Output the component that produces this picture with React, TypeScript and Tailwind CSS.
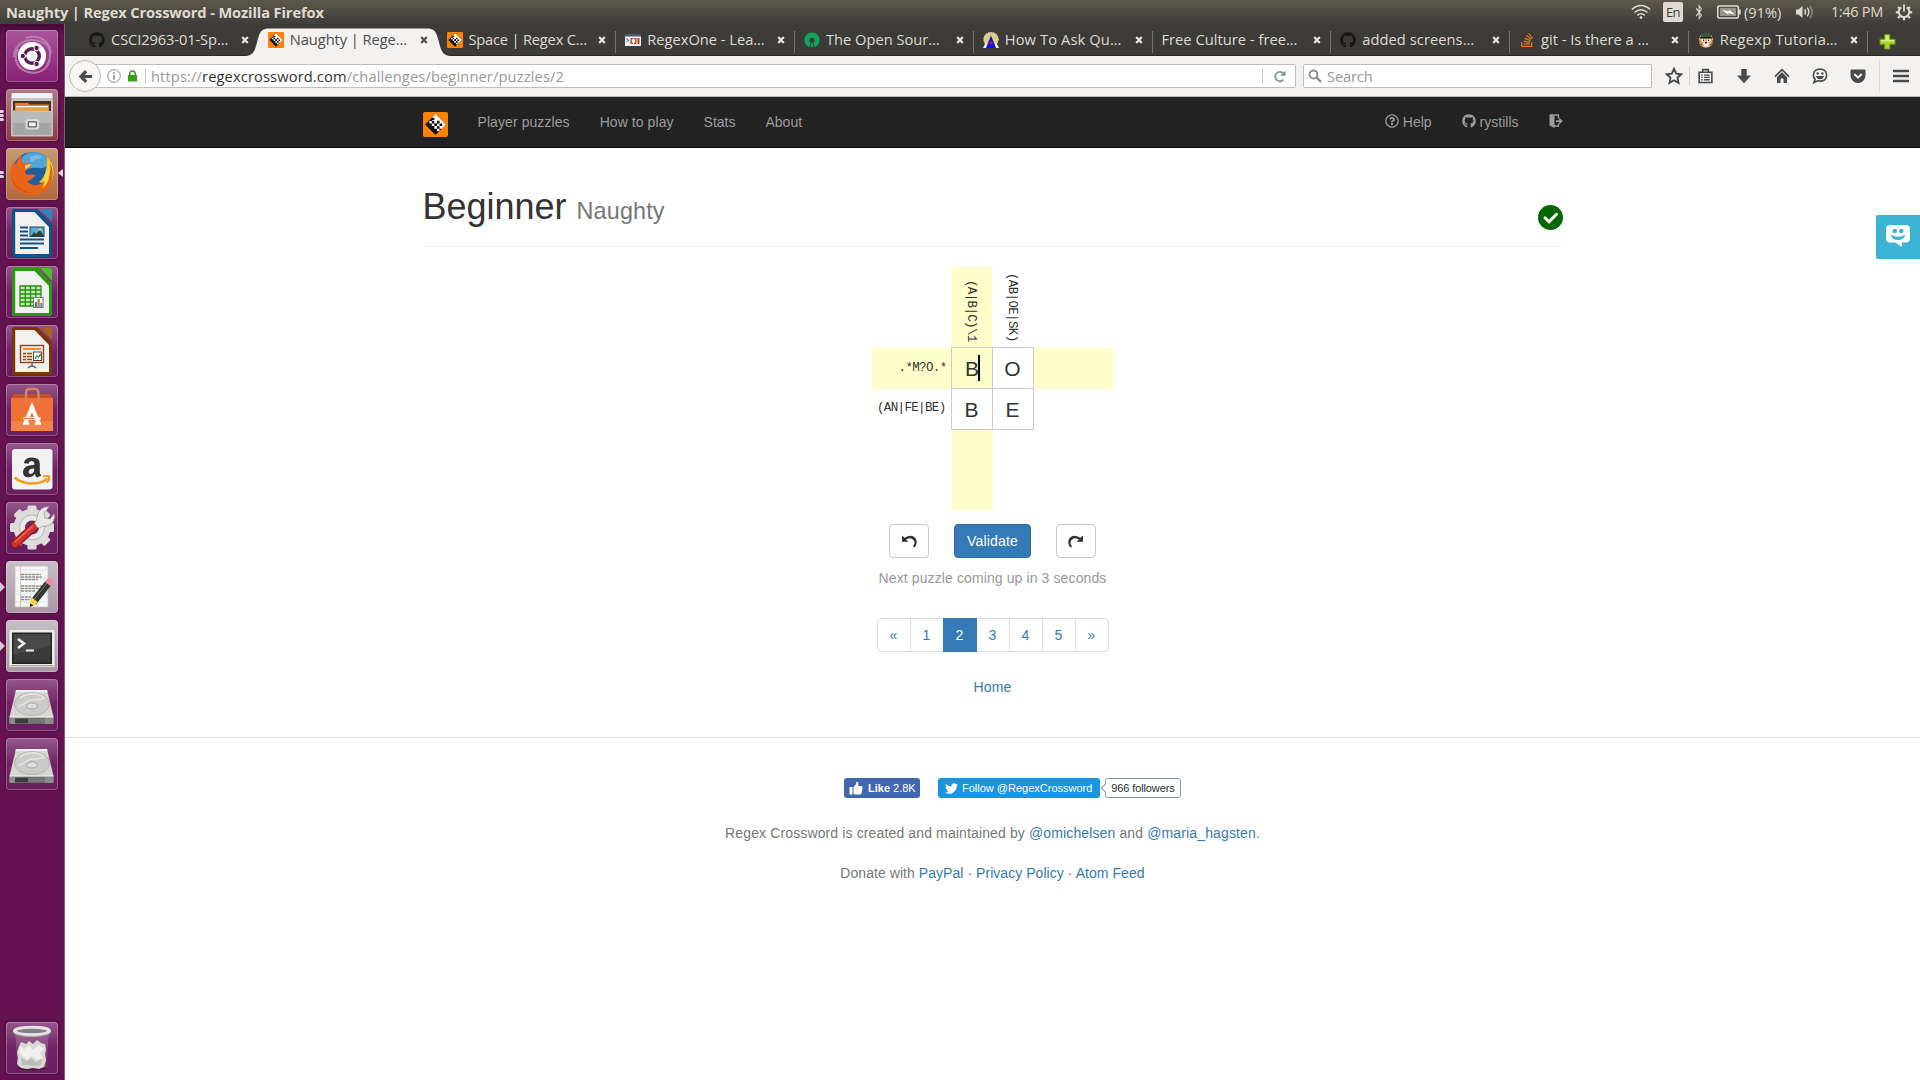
import type { ReactNode } from 'react';
import { FaGithub, FaStackOverflow, FaTwitter, FaBluetoothB, FaRegQuestionCircle } from 'react-icons/fa';

/* ---------- Regex Crossword logo ---------- */
function Logo({ className }: { className: string }) {
  return (
    <svg viewBox="0 0 26 26" className={className}>
      <rect width="26" height="26" rx="2" fill="#ff8200" />
      <path d="M13 2.2 23.8 13 13 23.8 2.2 13Z" fill="#111" />
      <path d="M13 2.2 23.8 13 19.5 17.3h-2.3v-2.6h-2.7v-2.8h-2.8V9.3H9.3V5.9Z" fill="#fff" />
      <path d="M9.2 6h2.6v2.6H9.2zM14.5 9.2h2.7v2.7h-2.7zM17.2 12h2.7v2.6h-2.7zM11.8 12h2.7v2.6h-2.7z" fill="#111" />
      <path d="M9.2 11.9h2.6v2.7H9.2zM11.8 14.6h2.7v2.7h-2.7zM14.5 17.3h2.7V20h-2.7zM6.5 9.3h2.7v2.6H6.5z" fill="#fff" />
    </svg>
  );
}

/* ---------- Launcher ---------- */
function Tile({ bg, children, left, right }: { bg: string; children: ReactNode; left?: number; right?: boolean }) {
  return (
    <div className="relative flex h-[52px] w-full shrink-0 items-center pl-[6px]">
      {left === 1 && <div className="absolute left-0 top-[21px] h-0 w-0 border-y-[5px] border-l-[5px] border-y-transparent border-l-[#d8c8d4]" />}
      {left !== undefined && left > 1 && (
        <div className="absolute left-0 top-0 flex h-full w-[5px] flex-col items-start justify-center gap-[1px]">
          {Array.from({ length: left }, (_, i) => (
            <div key={i} className="h-[3px] w-[4px] rounded-r-full bg-[#e0d0dc]" />
          ))}
        </div>
      )}
      {right && <div className="absolute right-[1px] top-[21px] h-0 w-0 border-y-[4px] border-r-[5px] border-y-transparent border-r-[#e6dae2]" />}
      <div className={`h-[52px] w-[52px] overflow-hidden rounded-[4px] shadow-[inset_0_0_0_1px_rgba(255,255,255,0.25),0_0_3px_rgba(0,0,0,0.35)] ${bg}`}>
        <svg viewBox="0 0 52 52" className="h-full w-full">{children}</svg>
      </div>
    </div>
  );
}

const plumTile = 'bg-gradient-to-b from-[#95578b] via-[#6f2264] to-[#6a1d5f]';

function Doc({ frame, corner, children }: { frame: string; corner: string; children: ReactNode }) {
  return (
    <>
      <path d="M9 2h22.5L46 17v31a2 2 0 0 1-2 2H8a2 2 0 0 1-2-2V4a2 2 0 0 1 2-2Z" fill={frame} />
      <path d="M9.2 5h19.3L43 20v27H9.2Z" fill="#f1f1f1" />
      <path d="M34 2h10a2 2 0 0 1 2 2v10.5Z" fill={corner} />
      {children}
    </>
  );
}

function Drive() {
  return (
    <>
      <path d="M10 11h31l6.5 27H3.5Z" fill="#d6d6d4" />
      <path d="M10 11h31l.5 2h-32Z" fill="#f1f1f0" />
      <ellipse cx="26" cy="25" rx="17.5" ry="11.5" fill="#cbcbc9" stroke="#b0b0ae" strokeWidth=".9" />
      <path d="M14 19c7-6 20-5 24 0-4 2-8 2-12 2s-7 5-14 6" fill="none" stroke="#e3e3e2" strokeWidth="1.6" />
      <ellipse cx="26" cy="27" rx="5.5" ry="3" fill="#dedede" stroke="#999" strokeWidth=".8" />
      <path d="M3.5 38h44l.3 5.5q0 1.5-1.5 1.5H4.7q-1.5 0-1.5-1.5Z" fill="#8d8d8b" />
      <path d="M9 39.500h30v5H9z" fill="#3c3c3b" />
      <path d="M22 39.500h17v5H22z" fill="#767674" />
      <path d="M3.500 38h44" stroke="#f3f3f3" strokeWidth="1" />
    </>
  );
}

function Launcher() {
  return (
    <aside className="flex w-[65px] shrink-0 flex-col gap-[7px] border-r border-[#8a5580] bg-[#641250] bg-gradient-to-b from-[#3f0b33] from-0% via-[#641250] via-[1%] to-[#641250] pt-[6px]">
      <Tile bg="bg-gradient-to-b from-[#a8559a] to-[#871d74]">
        <path d="M8 27C8 12 24 6 38 13c7 4 8 14 3 22M44 26c0 14-14 21-27 14-8-5-9-14-5-21M20 8c12-5 24 3 25 15" fill="none" stroke="#c389b9" strokeWidth="2" opacity=".8" />
        <circle cx="26" cy="26" r="14" fill="#fff" />
        <circle cx="26" cy="26" r="7.300" fill="none" stroke="#5a1a50" strokeWidth="3.400" />
        <path d="M26 26 12 26M26 26l7-12M26 26l7 12" stroke="#fff" strokeWidth="1.300" />
        <g fill="#5a1a50" stroke="#fff" strokeWidth="1"><circle cx="16.800" cy="26" r="2.700" /><circle cx="30.600" cy="18" r="2.700" /><circle cx="30.600" cy="34" r="2.700" /></g>
      </Tile>
      <Tile bg="bg-gradient-to-b from-[#b07a86] to-[#8a3a42]" left={3}>
        <path d="M6 4h40l1 9v33q0 1.500-1.500 1.500h-39Q5 47.500 5 46V13Z" fill="#c6c6c6" />
        <path d="M6 4h40l.6 5H5.400Z" fill="#f2f2f2" />
        <path d="M7 12h38v10H7z" fill="#4a3426" />
        <path d="M9 14h13l1.500 1.500H43V22H9z" fill="#e87a3a" />
        <path d="M10 17h32v1.500H10z" fill="#fff" /><path d="M10 18.500h32V22H10z" fill="#f0a050" />
        <path d="M6.500 21.500H19l2 2h24.500V46h-39Z" fill="#a5a5a5" />
        <path d="M6.500 21.500H19l2 2h24.500V34h-39Z" fill="#b9b9b9" />
        <rect x="19.500" y="30" width="13.500" height="10.500" rx="2.500" fill="#d9d9d9" />
        <rect x="22.300" y="32.800" width="8" height="5" rx=".5" fill="#f4f4f4" stroke="#5c5c5c" strokeWidth="1.200" />
      </Tile>
      <Tile bg="bg-gradient-to-b from-[#c79a76] to-[#b0683a]" left={2} right>
        <circle cx="27" cy="25" r="21" fill="#1f5f9c" />
        <path d="M17 8c7-6 19-5 25 3 2 6-3 10-9 9s-12 0-14 3c-3-5-5-9-2-15Z" fill="#53a5d8" />
        <path d="M24 9c4-3 9-3 12 0-2 3-6 1-8 4s-5 1-4-4Z" fill="#8bc9ea" opacity=".6" />
        <path d="M41 9c8 7 9 20 3 28-6 9-18 12-27 7 11 2 20-3 23-11-3 2-5 2-7 1 7-5 8-15 8-25Z" fill="#f9c62c" />
        <path d="M44 15c6 13 2 26-10 31-13 4-27-2-29.500-16C3.500 23 5 17 8.500 12.500c0 2 .5 3 1.500 4 1-4 3-7 6-9-1 4 0 6 2 8 3-1 7 0 8 1-1 3-4 5-7 6 0 2 1 3 2 4 3 1 6-1 9 1-3 1-4 5-9 6 5 5 13 4 17 0 6-5 7-11 6-18Z" fill="#e8641b" />
        <path d="M42.500 17c3 10 0 19-6 23 2-5 2-8 2-12 2-3 4-7 4-11Z" fill="#fbd743" />
        <path d="M5 26c2 10 10 19 23 19-10 1-21-5-23-19Z" fill="#c9400f" />
        <path d="m19 17 6-1c0 2-3 4-6 5Z" fill="#f8d0a0" />
      </Tile>
      <Tile bg={plumTile}>
        <Doc frame="#12528a" corner="#2f84bb">
          <path d="M14 20.500h8M14 24.500h8M14 28.500h8M14 32.500h24M14 36.500h24M14 41h18" stroke="#12528a" strokeWidth="2" />
          <rect x="24" y="20" width="14" height="9.500" fill="#5fb0d8" stroke="#12406a" strokeWidth="1" />
          <path d="m25 29 3-4 2 2 4-4 4 6Z" fill="#28452f" /><circle cx="34" cy="22.500" r="1.200" fill="#f4d23c" />
        </Doc>
      </Tile>
      <Tile bg={plumTile}>
        <Doc frame="#2a9a12" corner="#4cc02c">
          <path d="M14 20h21v20H14z" fill="#c4eab4" />
          <path d="M14 20h21v20H14zM14 24h21M14 28h21M14 32h21M14 36h21M19.300 20v20M24.500 20v20M29.800 20v20" stroke="#269010" strokeWidth="1.300" fill="none" />
          <rect x="27.500" y="31.500" width="9.500" height="10" fill="#fff" stroke="#777" />
          <path d="M29 36h2v5h-2z" fill="#2f84bb" /><path d="M31.500 33h2.200v8h-2.200z" fill="#e0641b" /><path d="M34.300 37h2v4h-2z" fill="#4a90d0" />
        </Doc>
      </Tile>
      <Tile bg={plumTile}>
        <Doc frame="#7c3508" corner="#a8621e">
          <rect x="14.500" y="20.500" width="23" height="17" fill="#f6eee4" stroke="#96430f" strokeWidth="1.400" />
          <path d="M17 24h18" stroke="#e88a4a" strokeWidth="2" />
          <path d="M17 28.500h3M17 31.500h3M17 34.500h3M21 28.500h5M21 31.500h5M21 34.500h5" stroke="#96430f" strokeWidth="1.700" />
          <rect x="27.500" y="27" width="8" height="8.500" fill="#fff" stroke="#444" /><path d="m29 34 2-3 1.500 1L35 29" stroke="#24962a" strokeWidth="1.300" fill="none" />
          <path d="M26 38v3M22 43q4-4 8 0" stroke="#666" strokeWidth="1.500" fill="none" />
        </Doc>
      </Tile>
      <Tile bg={plumTile}>
        <path d="M5 14.500 8 10h36l3 4.500Z" fill="#c4502a" />
        <path d="M5 14h42v33H5z" fill="#ef7136" /><path d="M5 37h42v10H5z" fill="#f58345" />
        <path d="M20 18V9q0-4 4-4h4.500q4 0 4 4v9" fill="none" stroke="#d98468" strokeWidth="2.500" />
        <g stroke="#fff" fill="none"><path d="m19.500 39 6.500-16 6.500 16" strokeWidth="4" /><path d="M17.500 34.500h17" strokeWidth="3" /><path d="M17 39.500h6M29 39.500h6" strokeWidth="2.500" /></g>
        <path d="M18 34.500h11" stroke="#ef7136" strokeWidth="1.200" />
      </Tile>
      <Tile bg={plumTile}>
        <rect x="6" y="6" width="40.500" height="40.500" rx="3" fill="#f2f2f2" />
        <path d="M31 34.500q-2-1.500-2-3.800-2.500 3.600-6.800 3.600-5.200 0-5.200-5.300 0-6.800 11.300-7v-1q0-3-2.600-3-2.700 0-3 2.700l-4.800-.4q.6-5.800 8.300-5.800 7.600 0 7.600 6.300V29q0 2.200 1.700 3.600ZM28.300 25.500q-5.700 0-5.700 3.400 0 2 1.900 2 3.800 0 3.800-5.400Z" fill="#333" />
        <path d="M8.500 34.500c9 7.500 24 8 33 1.200" fill="none" stroke="#f79b1f" strokeWidth="2.600" />
        <path d="M37 33.500q4-1.300 6.400.2-.2 3.800-2.600 6" fill="none" stroke="#f79b1f" strokeWidth="2" />
      </Tile>
      <Tile bg={plumTile}>
        <g transform="translate(26 25.500)">
          <circle r="14" fill="none" stroke="#dcdcda" strokeWidth="9" />
          {[0, 45, 90, 135, 180, 225, 270, 315].map((a) => (
            <rect key={a} x="-4.500" y="-22" width="9" height="8" rx="1.500" fill="#dcdcda" transform={`rotate(${a})`} />
          ))}
          <circle r="12.500" fill="#e8e8e7" stroke="#b8b8b6" /><circle r="7" fill="#6d2a62" />
        </g>
        <path d="m9 42 21-19" stroke="#8d1410" strokeWidth="8.500" strokeLinecap="round" />
        <path d="m9 42 21-19" stroke="#d0302a" strokeWidth="6.500" strokeLinecap="round" />
        <path d="m9 40 18-16" stroke="#ea6a62" strokeWidth="1.500" />
        <path d="M29 22c-1-2 2-3 2-7 1-7 7-11 12-10l-5 6 1 5 5 1 4-5c2 6-3 12-9 12-3 0-5 2-7 2Z" fill="#e9e9e8" stroke="#9a9a98" strokeWidth=".8" />
      </Tile>
      <Tile bg="bg-gradient-to-b from-[#c8bec6] to-[#a898a4]" left={1}>
        <path d="M9 5h33v41H9z" fill="#f7f7f6" stroke="#bcbcbc" strokeWidth=".8" />
        <path d="M14.500 5v41" stroke="#f0a8a8" strokeWidth=".8" />
        <path d="M10 9h31M10 17h31M10 33h31M10 41h31" stroke="#c8d4ea" strokeWidth=".6" />
        <path d="M15 13.500h20M15 16h21M15 18.500h17M15 25h21M15 27.500h20M15 30h14M15 36h10M15 38.500h9" stroke="#8e8e8e" strokeWidth="1.300" strokeDasharray="3 .7" />
        <path d="m24.500 39 15-19 5.500 4.500-15 19Z" fill="#33352f" /><path d="m26.500 40.500 15-19" stroke="#777" strokeWidth="1" />
        <path d="m24.500 39 1.500-2.500 5.700 4.500-1.700 2.500-6 2.500Z" fill="#f0d442" /><path d="m24.200 42.500-.4 3.600 3.500-1.500Z" fill="#222" />
        <path d="m39 21 3-4q1-1 2.500 0l2.300 2q1.200 1 .2 2.300L44.500 25Z" fill="#e88ca8" />
      </Tile>
      <Tile bg="bg-gradient-to-b from-[#c8bec6] to-[#a898a4]" left={1}>
        <rect x="3.500" y="10" width="45" height="37" rx="1.500" fill="#ececea" /><rect x="6" y="12.500" width="40" height="31.500" fill="#222" />
        <rect x="7.500" y="14" width="37" height="28.500" fill="#393a39" /><path d="M7.500 14h37v12l-37 9Z" fill="#474847" />
        <path d="m12 19 6 4.500-6 4.500" fill="none" stroke="#eee" strokeWidth="2.600" /><path d="M20 30.500h8" stroke="#eee" strokeWidth="2.200" />
        <path d="M5 45.700h42" stroke="#8c8c8a" />
      </Tile>
      <Tile bg={plumTile}><Drive /></Tile>
      <Tile bg={plumTile}><Drive /></Tile>
      <div className="flex-1" />
      <div className="pb-[6px]">
        <Tile bg={plumTile}>
          <path d="M9 9h34l-3 37q-14 4-28 0Z" fill="#b99ab4" opacity=".35" />
          <ellipse cx="26" cy="46" rx="14" ry="2.500" fill="#4e1843" />
          <path d="m12 27 3-7 5 2 3-3 4 3 4-4 4 3 4 1 1 5-1 5 1 6-2 7-5 2-6-1-6 1-6-1-4-4 1-6-1-5Z" fill="#d9d9d4" />
          <path d="m14 24 5 3 4-4 4 5 6-5 5 4-4 4 3 5-6 2-5-4-5 4-5-4-3-4Z" fill="#f0f0ee" /><path d="m15 36 6 3 4-3 5 4 6-3-1 6-8 1-6-1-5 0Z" fill="#bdbdb8" />
          <ellipse cx="26" cy="9" rx="17.500" ry="3.800" fill="#8c7c88" stroke="#e4e4e2" strokeWidth="3" />
          <path d="M9.500 12q16 5.500 33 0" stroke="#a8a8a5" strokeWidth="1" fill="none" />
        </Tile>
      </div>
    </aside>
  );
}

/* ---------- Desktop top bar ---------- */
function TopBar() {
  return (
    <header className="flex h-[24px] shrink-0 items-center bg-gradient-to-b from-[#5c584a] to-[#3f3e3a] pl-[6px] font-['Open_Sans',sans-serif] text-[14.67px] leading-[24px] text-[#dfdbd2]">
      <span className="-mt-[1px] font-bold tracking-[-0.12px]">Naughty | Regex Crossword - Mozilla Firefox</span>
      <div className="flex-1" />
      <svg viewBox="0 0 20 16" className="h-4 w-5" fill="none" stroke="#dfdbd2" strokeWidth="1.500">
        <path d="M.8 5.500q9.200-8 18.400 0M3.500 8.500q6.500-5.500 13 0M6.300 11.300q3.700-3 7.400 0" />
        <circle cx="10" cy="13.600" r="1" fill="#dfdbd2" strokeWidth="1" />
      </svg>
      <span className="ml-[12px] flex h-[20px] w-[20px] items-center justify-center rounded-[2px] bg-[#dfdbd2] text-[13px] leading-[20px] tracking-[-0.6px] text-[#3c3b37]">En</span>
      <FaBluetoothB className="ml-[8px] h-[16px] w-[16px] scale-x-75 text-[#dfdbd2]" />
      <svg viewBox="0 0 24 14" className="ml-[10px] h-[14px] w-[24px]">
        <rect x=".8" y="1" width="20.500" height="12" rx="1" fill="none" stroke="#dfdbd2" strokeWidth="1.500" />
        <rect x="3" y="3" width="16" height="8" fill="#96938b" /><path d="M22 4.500h1.700v5H22z" fill="#dfdbd2" />
        <path d="m5 5 7 1.500-.5-2 6.500 5-7-1.500.7 2Z" fill="#fff" />
      </svg>
      <span className="ml-[3px] w-[38px] whitespace-nowrap">(91%)</span>
      <svg viewBox="0 0 20 16" className="ml-[13px] h-4 w-5" fill="none" stroke="#dfdbd2" strokeWidth="1.400">
        <path d="M1 5.500h2.500L7.500 2v12l-4-3.500H1Z" fill="#dfdbd2" stroke="none" />
        <path d="M9.700 5.500q1.800 2.500 0 5M12.300 3.700q3 4.300 0 8.600" /><path d="M15 2q4.300 6 0 12" stroke="#8d8a82" />
      </svg>
      <span className="ml-[16px] whitespace-nowrap text-[14.500px] tracking-[-0.3px]">1:46 PM</span>
      <svg viewBox="0 0 18 18" className="ml-[12px] mr-[7px] h-[18px] w-[18px]" fill="none" stroke="#dfdbd2">
        <path d="M6.200 4.300a5.300 5.300 0 1 0 5.600 0" strokeWidth="2" /><path d="M9 1.500v7" strokeWidth="1.800" />
        <path d="M3 4l1.700 1.500M15 4l-1.700 1.500M.8 9.300h2.700M14.500 9.300h2.700M3 15l1.800-1.800M15 15l-1.800-1.800M9 14.500v2.700" strokeWidth="2.200" />
      </svg>
    </header>
  );
}

/* ---------- Browser tabs ---------- */
const favicon = 'h-4 w-4 shrink-0';
const tabs: { title: string; icon?: ReactNode; track: string }[] = [
  { title: 'CSCI2963-01-Sp…', icon: <FaGithub className={`${favicon} text-[#191717]`} />, track: 'tracking-[-0.1px]' },
  { title: 'Naughty | Rege…', icon: <Logo className={favicon} />, track: 'tracking-[-0.06px]' },
  { title: 'Space | Regex C…', icon: <Logo className={favicon} />, track: 'tracking-[-0.2px]' },
  {
    title: 'RegexOne - Lea…',
    icon: (
      <svg viewBox="0 0 16 16" className={favicon}>
        <rect y="2" width="16" height="12" fill="#f4f4f2" /><path d="M0 2h16v2.500H0z" fill="#4a5a70" />
        <path d="m1.500 6.500 2 1.700-2 1.700" stroke="#444" fill="none" /><path d="M5.500 6H8v1.200H6.800v3.600H8V12H5.500zM9 6h2.500v6H9v-1.200h1.200V7.200H9zM12.500 6h2v6h-2z" fill="#c43c1c" />
      </svg>
    ),
    track: 'tracking-[0px]',
  },
  {
    title: 'The Open Sour…',
    icon: (
      <svg viewBox="0 0 16 16" className={favicon}>
        <path d="M5.700 15.300A7.600 7.600 0 1 1 10.300 15.300L8.900 10.700A2.600 2.600 0 1 0 7.100 10.700Z" fill="#0fa65c" /><path d="M6.900 10.500h2.200l.7 5H6.200Z" fill="#0fa65c" stroke="#3c3b37" strokeWidth=".8" />
      </svg>
    ),
    track: 'tracking-[0px]',
  },
  {
    title: 'How To Ask Qu…',
    icon: (
      <svg viewBox="0 0 16 16" className={favicon}>
        <circle cx="8" cy="7.500" r="7.300" fill="#d8d080" stroke="#eee" strokeWidth=".8" strokeDasharray="1.300 1.300" />
        <path d="M0 16 3 10l3 6ZM16 16l-3-6-3 6Z" fill="#eee" /><path d="M8 3.500 13 16H3Z" fill="#1010e0" /><circle cx="8" cy="11" r="1.700" fill="#b01840" />
      </svg>
    ),
    track: 'tracking-[0.12px]',
  },
  { title: 'Free Culture - free…', track: 'tracking-[0.03px]' },
  { title: 'added screens…', icon: <FaGithub className={`${favicon} text-[#191717]`} />, track: 'tracking-[0.07px]' },
  { title: 'git - Is there a …', icon: <FaStackOverflow className={`${favicon} text-[#e87424]`} />, track: 'tracking-[0px]' },
  {
    title: 'Regexp Tutoria…',
    icon: (
      <svg viewBox="0 0 16 16" className={favicon}>
        <circle cx="8" cy="8.500" r="7.300" fill="#e0a060" /><path d="M2.500 4Q8-2.500 13.500 4L12 5.500H4Z" fill="#2c5c38" /><path d="M1 5h14l-1.500 1.500h-11Z" fill="#241a14" />
        <path d="M3.500 7h3.700v2.500H3.500zM8.800 7h3.700v2.500H8.800z" fill="#fff" /><path d="M5 7.500h1.300v1.600H5zM9.800 7.500h1.300v1.600H9.800z" fill="#222" />
        <path d="M5 11q3-2 6 0l-1 3.500H6Z" fill="#fff" /><path d="M7 10h2v1.500H7z" fill="#222" /><path d="M1 8v3M15 8v3M2.500 12l1.500 1M13.500 12 12 13" stroke="#5a2c14" />
      </svg>
    ),
    track: 'tracking-[0.25px]',
  },
];

function TabClose({ dark }: { dark: boolean }) {
  return (
    <svg viewBox="0 0 8 8" className={dark ? 'h-2 w-2 text-[#555]' : 'h-2 w-2 text-[#e6e4e0]'}>
      <path d="m1.200 1 5.600 6M6.800 1 1.200 7" stroke="currentColor" strokeWidth="2.200" />
    </svg>
  );
}

function TabBar() {
  return (
    <div className="flex h-[32px] shrink-0 border-b border-[#2a2926] bg-[#3c3b37] pl-[15px] font-['Open_Sans',sans-serif] text-[14.67px] leading-[20px] text-[#dedbd4]">
      {tabs.map((t, i) => {
        const active = i === 1;
        return (
          <div key={t.title} className="relative flex h-[31px] w-[178.750px] shrink-0 items-center pl-[9px]">
            {active && (
              <svg viewBox="0 0 206 28" className="absolute -left-[14px] top-[4px] h-[28px] w-[206px]">
                <path d="M0 28c7-.5 9-3 11-10l2.500-9C15.500 2.500 18 .5 24 .5h158c6 0 8.500 2 10.500 8.500l2.500 9c2 7 4 9.500 11 10Z" fill="#f3f2f0" />
              </svg>
            )}
            <div className={`relative flex w-full items-center gap-[6px] ${active ? 'text-[#4c4c4c]' : ''}`}>
              {t.icon}
              <span className={`-mt-[1px] flex-1 overflow-hidden whitespace-nowrap ${t.track}`}>{t.title}</span>
              <div className="mr-[10px] shrink-0"><TabClose dark={active} /></div>
            </div>
            {i > 1 && <div className="absolute right-0 top-[7px] h-[22px] w-px bg-[#77756f]" />}
          </div>
        );
      })}
      <svg viewBox="0 0 18 18" className="ml-[11px] mt-[9px] h-[17px] w-[17px]">
        <path d="M6 1.500h5.500v5H17V12h-5.500v5H6v-5H1V6.500h5Z" fill="#a8d324" stroke="#6c9410" />
        <path d="M7 2.500h3.500v5H16v1.500H2V7.500h5Z" fill="#d6ef7c" />
      </svg>
    </div>
  );
}

/* ---------- Browser toolbar ---------- */
function Toolbar() {
  return (
    <div className="flex h-[41px] shrink-0 items-center border-b border-[#bdb9b4] bg-[#f3f2f0] pl-[4px] font-['Open_Sans',sans-serif] text-[14.670px] leading-[20px]">
      <div className="z-10 flex h-[32px] w-[32px] shrink-0 items-center justify-center rounded-full border border-[#bdbab6] bg-[#f8f7f6]">
        <svg viewBox="0 0 16 16" className="h-[15px] w-[15px]"><path d="M7.500 1 10 3.500 7.300 6.300H15v3.400H7.300L10 12.500 7.500 15 .7 8Z" fill="#4d4d4d" /></svg>
      </div>
      <div className="-ml-[10px] flex h-[24px] w-[1205px] shrink-0 items-center rounded-[2px] border border-[#c2bfbb] bg-white pl-[15px]">
        <svg viewBox="0 0 14 14" className="h-[14px] w-[14px]"><circle cx="7" cy="7" r="6.300" fill="none" stroke="#8c8c8c" /><path d="M6.200 3.200h1.600v1.500H6.200zM6.200 5.800h1.600v5H6.200z" fill="#8c8c8c" /></svg>
        <svg viewBox="0 0 11 13" className="ml-[6px] h-[12px] w-[11px]"><path d="M2.500 6V4a3 3 0 0 1 6 0v2" fill="none" stroke="#3f9c1c" strokeWidth="1.600" /><rect x=".5" y="5.500" width="10" height="7" rx=".8" fill="#3f9c1c" /></svg>
        <div className="ml-[7px] h-[16px] w-px bg-[#d0d0d0]" />
        <span className="-mt-[1px] ml-[5px] flex-1 whitespace-nowrap tracking-[0.130px] text-[#999]">https://<span className="text-[#333]">regexcrossword.com</span>/challenges/beginner/puzzles/2</span>
        <div className="h-[16px] w-px bg-[#d0d0d0]" />
        <svg viewBox="0 0 13 13" className="ml-[10px] mr-[9px] h-[13px] w-[13px]"><path d="M10.600 9.500a4.700 4.700 0 1 1-.4-6.300" fill="none" stroke="#8291a2" strokeWidth="1.800" /><path d="M12.500.5v5.300H7.200Z" fill="#8291a2" /></svg>
      </div>
      <div className="ml-[7px] flex h-[24px] w-[349px] shrink-0 items-center rounded-[2px] border border-[#c2bfbb] bg-white pl-[4px]">
        <svg viewBox="0 0 14 14" className="h-[14px] w-[14px]" fill="none" stroke="#8c8c8c"><circle cx="5.500" cy="5.500" r="4" strokeWidth="1.800" /><path d="m8.500 8.500 4.500 4.500" strokeWidth="2.400" /></svg>
        <span className="-mt-[1px] ml-[5px] tracking-[-0.150px] text-[#999]">Search</span>
      </div>
      <div className="flex flex-1 items-center text-[#4a4a4a]">
        <svg viewBox="0 0 18 18" className="ml-[13px] h-[18px] w-[18px]"><path d="m9 1.800 2.200 4.800 5.100.6-3.800 3.500 1 5.200L9 13.300l-4.500 2.600 1-5.200L1.700 7.200l5.100-.6Z" fill="none" stroke="currentColor" strokeWidth="1.900" /></svg>
        <div className="ml-[6px] h-[18px] w-px bg-[#d2d0cd]" />
        <svg viewBox="0 0 16 16" className="ml-[8px] h-[16px] w-[15px]"><path d="M1.200 4h13.600v11H1.200zM5 4V1.200h6V4" fill="none" stroke="currentColor" strokeWidth="1.700" /><path d="M3.500 7h1.500M3.500 9.500h1.500M3.500 12h1.500M6.500 7h6M6.500 9.500h6M6.500 12h6" stroke="currentColor" strokeWidth="1.400" /></svg>
        <svg viewBox="0 0 16 16" className="ml-[23px] h-[16px] w-[16px]"><path d="M5.300 1h5.400v6.500H15l-7 7.700-7-7.700h4.300Z" fill="currentColor" /></svg>
        <svg viewBox="0 0 16 16" className="ml-[22px] h-[16px] w-[16px]"><path d="m1 8.700 7-7 7 7" fill="none" stroke="currentColor" strokeWidth="1.700" /><path d="m8 4.300 5 5V15H9.500v-4.500h-3V15H3V9.300Z" fill="currentColor" /></svg>
        <svg viewBox="0 0 16 16" className="ml-[22px] h-[16px] w-[16px]"><path d="M8 1.200c4 0 6.600 2.500 6.600 6s-2.600 6-6.600 6q-1.300 0-2.400-.4L2 14.500l1-3.300Q1.400 9.500 1.400 7.200c0-3.500 2.600-6 6.600-6Z" fill="none" stroke="currentColor" strokeWidth="1.700" /><circle cx="5.700" cy="5.500" r="1.200" fill="currentColor" /><circle cx="10.300" cy="5.500" r="1.200" fill="currentColor" /><path d="M4 8h8q-.8 3.300-4 3.300T4 8Z" fill="currentColor" /></svg>
        <svg viewBox="0 0 16 16" className="ml-[22px] h-[16px] w-[16px]"><path d="M1.500 1.500h13q1 0 1 1V7c0 4.500-3.500 8-7.500 8S.5 11.500.5 7V2.500q0-1 1-1Z" fill="currentColor" /><path d="m4.300 6 3.700 3.600L11.700 6" fill="none" stroke="#f3f2f0" strokeWidth="2" /></svg>
        <div className="ml-[13px] h-[32px] w-px bg-[#dddbd8]" />
        <svg viewBox="0 0 16 14" className="ml-[13px] h-[14px] w-[16px]"><path d="M1 2h14M1 7h14M1 12h14" stroke="currentColor" strokeWidth="2.600" strokeLinecap="round" /></svg>
      </div>
    </div>
  );
}

/* ---------- Site navigation ---------- */
function NavBar() {
  return (
    <nav className="flex h-[51px] shrink-0 justify-center border-b border-[#080808] bg-[#222]">
      <div className="flex w-[1140px] items-center text-[14px] leading-[20px] text-[#9d9d9d]">
        <Logo className="mt-[4px] h-[25px] w-[25px]" />
        <div className="ml-[30px] flex gap-[30px]">
          <span className="tracking-[0.080px]">Player puzzles</span>
          <span className="tracking-[0.070px]">How to play</span>
          <span>Stats</span>
          <span>About</span>
        </div>
        <div className="flex-1" />
        <div className="flex items-center gap-[4px]"><FaRegQuestionCircle className="-mt-[2px] h-[14px] w-[14px]" /><span>Help</span></div>
        <div className="ml-[30px] flex items-center gap-[4px]"><FaGithub className="-mt-[2px] h-[14px] w-[14px]" /><span>rystills</span></div>
        <svg viewBox="0 0 14 14" className="-mt-[3px] ml-[30px] h-[14px] w-[14px]">
          <path d="M.5.500 5.500 2v12L.5 11.500Z" fill="#9d9d9d" /><path d="M1 1h8.500v3.500M9.500 9.500V12H5" fill="none" stroke="#9d9d9d" strokeWidth="1.300" /><path d="M7 6.200h3.200V3.700L14 7l-3.800 3.300V7.900H7Z" fill="#9d9d9d" />
        </svg>
      </div>
    </nav>
  );
}

/* ---------- Puzzle ---------- */
const mono = "font-['Liberation_Mono',monospace] text-[12.500px] tracking-[-0.650px] text-[#333]";
const cell = 'flex h-[42px] w-[42px] items-center justify-center border border-[#ccc] text-[21px] leading-none text-[#333]';

function Puzzle() {
  return (
    <div className="mt-[20px] grid grid-cols-[79px_41px_41px_81px] grid-rows-[80px_41px_41px_80px]">
      <div />
      <div className="flex items-end justify-center bg-[#ffffcc] pb-[5px]">
        <span className={`[writing-mode:vertical-rl] ${mono}`}>(A|B|C)\1</span>
      </div>
      <div className="flex items-end justify-center pb-[5px]">
        <span className={`[writing-mode:vertical-rl] ${mono}`}>(AB|OE|SK)</span>
      </div>
      <div />

      <div className="-mr-px -mb-px mt-[1px] flex h-[41px] items-center justify-end bg-[#ffffcc] pr-[5px]"><span className={mono}>.*M?O.*</span></div>
      <div className={`${cell} bg-[#ffffcc]`}><span className="pl-[2px]">B</span><span className="-ml-[1px] h-[26px] w-[2px] bg-black" /></div>
      <div className={`${cell} bg-white`}>O</div>
      <div className="ml-[1px] mt-[1px] h-[41px] bg-[#ffffcc]" />

      <div className="flex items-center justify-end pr-[5px]"><span className={mono}>(AN|FE|BE)</span></div>
      <div className={`${cell} bg-white`}>B</div>
      <div className={`${cell} bg-white`}>E</div>
      <div />

      <div />
      <div className="ml-[1px] mt-[1px] h-[80px] w-[41px] bg-[#ffffcc]" />
    </div>
  );
}

function RoundArrow({ flip }: { flip?: boolean }) {
  return (
    <svg viewBox="0 0 16 14" className={flip ? 'h-[14px] w-[16px] -scale-x-100' : 'h-[14px] w-[16px]'}>
      <path d="M1 1.500v6.200h6.300L5.100 5.400q5.500-3 8 1.300 1.300 3-1.200 5.800l1.700 1q3.300-3.800 1.600-8Q11.800-.8 3.500 3.800Z" fill="#333" />
    </svg>
  );
}

function Content() {
  const pages = ['«', '1', '2', '3', '4', '5', '»'];
  return (
    <div className="flex flex-col items-center">
      <div className="mt-[39px] flex h-[60px] w-[1140px] justify-between border-b border-[#eee]">
        <h1 className="text-[36px] leading-[40px] text-[#333]">Beginner <small className="text-[23.400px] tracking-[0.120px] text-[#777]">Naughty</small></h1>
        <svg viewBox="0 0 25 25" className="mt-[18px] h-[25px] w-[25px]"><circle cx="12.500" cy="12.500" r="12.500" fill="#060" /><path d="m7 12.800 4 4 7.500-7.500" fill="none" stroke="#fff" strokeWidth="3" strokeLinecap="round" /></svg>
      </div>
      <Puzzle />
      <div className="mt-[15px] flex gap-[25px] text-[14px] leading-[20px]">
        <button className="flex h-[34px] w-[40px] items-center justify-center rounded-[4px] border border-[#ccc] bg-white"><RoundArrow /></button>
        <button className="h-[34px] w-[77px] rounded-[4px] border border-[#2e6da4] bg-[#337ab7] tracking-[0.150px] text-white">Validate</button>
        <button className="flex h-[34px] w-[40px] items-center justify-center rounded-[4px] border border-[#ccc] bg-white"><RoundArrow flip /></button>
      </div>
      <p className="mt-[10px] text-[14px] leading-[20px] tracking-[0.110px] text-[#999]">Next puzzle coming up in 3 seconds</p>
      <div className="mt-[30px] flex text-[14px] leading-[20px]">
        {pages.map((p, i) => (
          <a
            key={p}
            className={`flex h-[34px] items-center justify-center border ${i === 2 ? 'z-10 w-[34px] border-[#337ab7] bg-[#337ab7] text-white' : 'w-[34px] border-[#ddd] bg-white text-[#337ab7]'} ${i === 0 ? 'rounded-l-[4px]' : '-ml-px'} ${i === 6 ? 'rounded-r-[4px]' : ''}`}
          >
            {p}
          </a>
        ))}
      </div>
      <a className="mt-[25px] text-[14px] leading-[20px] tracking-[0.130px] text-[#337ab7]">Home</a>
    </div>
  );
}

/* ---------- Footer ---------- */
function Footer() {
  const link = 'text-[#337ab7]';
  return (
    <footer className="mt-[40px] flex flex-col items-center border-t border-[#ddd] text-[14px] leading-[20px] text-[#777]">
      <div className="ml-[40px] mt-[40px] flex h-[20px] text-[11px] leading-[20px]">
        <div className="flex w-[76px] items-center rounded-[3px] bg-[#4267b2] pl-[5px] text-white">
          <svg viewBox="0 0 14 14" className="mr-[5px] h-[14px] w-[14px]"><path d="M.5 6h3v7.500h-3zM4.500 6.200 7.200 3V.8Q9.500.3 9.500 3L9 5h3.500q1.200.2 1 1.500l-1 6q-.3 1-1.300 1H6l-1.500-.8Z" fill="#fff" /></svg>
          <b>Like</b><span className="ml-[3px]">2.8K</span>
        </div>
        <div className="ml-[18px] flex w-[162px] items-center rounded-[3px] bg-[#1b95e0] pl-[7px] text-white">
          <FaTwitter className="mr-[4px] h-[13px] w-[13px]" /><span className="whitespace-nowrap">Follow @RegexCrossword</span>
        </div>
        <div className="relative ml-[5px] flex w-[76px] items-center justify-center whitespace-nowrap rounded-[3px] border border-[#8799a5] bg-white tracking-[-0.120px] text-[#292f33]">
          <span className="absolute -left-[4px] top-[6px] h-[6px] w-[6px] rotate-45 border-b border-l border-[#8799a5] bg-white" />
          <span>966 followers</span>
        </div>
      </div>
      <p className="mt-[25px] tracking-[0.130px]">Regex Crossword is created and maintained by <a className={link}>@omichelsen</a> and <a className={link}>@maria_hagsten</a>.</p>
      <p className="mt-[20px] tracking-[0.050px]">Donate with <a className={link}>PayPal</a> · <a className={link}>Privacy Policy</a> · <a className={link}>Atom Feed</a></p>
    </footer>
  );
}

export default function App() {
  return (
    <div className="flex h-[1080px] w-[1920px] flex-col overflow-hidden bg-white">
      <TopBar />
      <div className="flex min-h-0 flex-1">
        <Launcher />
        <div className="flex min-w-0 flex-1 flex-col">
          <TabBar />
          <Toolbar />
          <main className="relative flex flex-1 flex-col bg-white font-['Liberation_Sans',Arial,sans-serif]">
            <NavBar />
            <Content />
            <Footer />
            <div className="absolute right-0 top-[118px] flex h-[44px] w-[44px] justify-center rounded-l-[2px] bg-[#3ab4d2] pt-[10px]">
              <svg viewBox="0 0 24 22" className="h-[22px] w-[24px]"><path d="M4 0h16q4 0 4 4v9.500q0 4-4 4h-4V22l-7-4.500H4q-4 0-4-4V4q0-4 4-4Z" fill="#fff" /><circle cx="8.700" cy="6" r="2.300" fill="#3ab4d2" /><circle cx="15.300" cy="6" r="2.300" fill="#3ab4d2" /><path d="M4.500 9.500Q12 14 19.500 9.500 17.500 15 12 15T4.500 9.500Z" fill="#3ab4d2" /></svg>
            </div>
          </main>
        </div>
      </div>
    </div>
  );
}
